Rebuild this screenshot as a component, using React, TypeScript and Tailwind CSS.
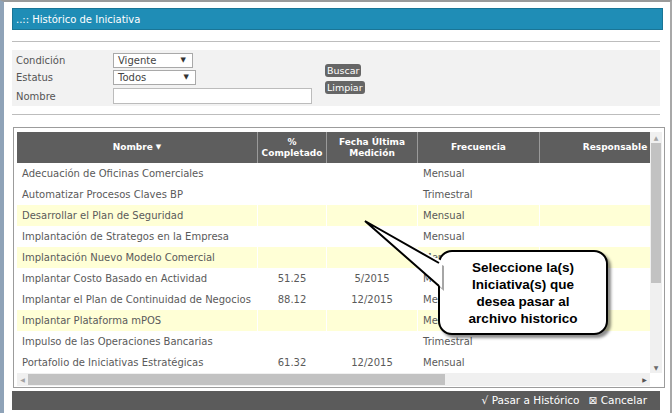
import React from "react";

type Row = {
  nombre: string;
  pct: string;
  fecha: string;
  frec: string;
  marked?: boolean;
};

const rows: Row[] = [
  { nombre: "Adecuación de Oficinas Comerciales", pct: "", fecha: "", frec: "Mensual" },
  { nombre: "Automatizar Procesos Claves BP", pct: "", fecha: "", frec: "Trimestral" },
  { nombre: "Desarrollar el Plan de Seguridad", pct: "", fecha: "", frec: "Mensual", marked: true },
  { nombre: "Implantación de Strategos en la Empresa", pct: "", fecha: "", frec: "Mensual" },
  { nombre: "Implantación Nuevo Modelo Comercial", pct: "", fecha: "", frec: "Mensual", marked: true },
  { nombre: "Implantar Costo Basado en Actividad", pct: "51.25", fecha: "5/2015", frec: "Mensual" },
  { nombre: "Implantar el Plan de Continuidad de Negocios", pct: "88.12", fecha: "12/2015", frec: "Mensual" },
  { nombre: "Implantar Plataforma mPOS", pct: "", fecha: "", frec: "Mensual", marked: true },
  { nombre: "Impulso de las Operaciones Bancarias", pct: "", fecha: "", frec: "Trimestral" },
  { nombre: "Portafolio de Iniciativas Estratégicas", pct: "61.32", fecha: "12/2015", frec: "Mensual" },
];

const FakeSelect = ({ value, width }: { value: string; width: string }) => (
  <div
    className={`${width} h-[15px] bg-white border border-[#a9a9a9] flex items-center justify-between pl-[4px] pr-[6px] text-[10px] text-[#444]`}
  >
    <span>{value}</span>
    <span className="text-[7px] text-[#333]">▼</span>
  </div>
);

const App = () => {
  return (
    <div className="w-[672px] h-[413px] bg-white overflow-hidden font-['DejaVu_Sans',sans-serif]">
      <div className="relative h-[413px] border-t-2 border-r-2 border-l-[4px] border-t-[#9a9a9a] border-r-[#a8a8a8] border-l-[#8fa3b8] pl-[8px] pr-[7px] pt-[6px]">
        {/* title */}
        <div className="h-[22px] bg-[#1f8db6] border border-[#1a7596] flex items-center pl-[3px] text-[10px] text-white">
          ..:: Histórico de Iniciativa
        </div>
        <div className="h-[1px] bg-[#bdbdbd] mt-[11px] mr-[3px]" />

        {/* filters */}
        <div className="h-[56px] bg-[#f2f2f2] mt-[8px] mr-[3px] flex items-center text-[10px] text-[#555]">
          <div className="flex flex-col gap-[2px] pl-[4px] mt-[1px]">
            <div className="flex items-center h-[15px]">
              <span className="w-[97px]">Condición</span>
              <FakeSelect value="Vigente" width="w-[80px]" />
            </div>
            <div className="flex items-center h-[15px]">
              <span className="w-[97px]">Estatus</span>
              <FakeSelect value="Todos" width="w-[83px]" />
            </div>
            <div className="flex items-center h-[16px] mt-[1px]">
              <span className="w-[97px]">Nombre</span>
              <div className="w-[199px] h-[16px] bg-white border border-[#bcbcbc]" />
            </div>
          </div>
          <div className="flex flex-col items-start gap-[4px] ml-[13px] mt-[1px]">
            <div className="h-[13px] px-[2px] rounded-[3px] bg-[#666] text-white text-[9.5px] leading-[13px]">Buscar</div>
            <div className="h-[13px] px-[2px] rounded-[3px] bg-[#666] text-white text-[9.5px] leading-[13px]">Limpiar</div>
          </div>
        </div>
        <div className="h-[1px] bg-[#bdbdbd] mt-[8px] mr-[3px]" />

        {/* grid */}
        <div className="mt-[12px] ml-[1px] w-[652px] h-[261px] border border-[#9c9c9c] pl-[3px] pt-[4px]">
          <div className="flex w-[645px] h-[241px]">
            <div className="w-[633px] overflow-hidden">
              <div className="flex w-[673px] h-[31px] bg-[#5e5e5e] text-white text-[9px] font-bold leading-[11px]">
                <div className="w-[241px] flex items-center justify-center border-r border-[#9a9a9a]">
                  Nombre
                  <span className="ml-[3px] text-[7px]">▼</span>
                </div>
                <div className="w-[69px] flex flex-col items-center justify-center text-center border-r border-[#9a9a9a]">
                  <span>%</span>
                  <span>Completado</span>
                </div>
                <div className="w-[91px] flex flex-col items-center justify-center text-center border-r border-[#9a9a9a]">
                  <span>Fecha Última</span>
                  <span>Medición</span>
                </div>
                <div className="w-[122px] flex items-center justify-center border-r border-[#9a9a9a]">Frecuencia</div>
                <div className="w-[150px] flex items-center justify-center">Responsable</div>
              </div>
              {rows.map((r) => (
                <div
                  key={r.nombre}
                  className={`flex w-[673px] h-[21px] items-center text-[10px] text-[#5a5a5a] ${r.marked ? "bg-[#ffffd6]" : "bg-white"}`}
                >
                  <div className="w-[241px] h-full flex items-center pl-[5px] border-r border-white">{r.nombre}</div>
                  <div className="w-[69px] h-full flex items-center justify-center border-r border-white">{r.pct}</div>
                  <div className="w-[91px] h-full flex items-center justify-center border-r border-white">{r.fecha}</div>
                  <div className="w-[122px] h-full flex items-center pl-[5px] border-r border-white">{r.frec}</div>
                  <div className="w-[150px] h-full" />
                </div>
              ))}
            </div>
            {/* vertical scrollbar */}
            <div className="w-[12px] h-full bg-[#f0f0f0] flex flex-col items-center">
              <div className="h-[11px] flex items-center text-[6px] text-[#a3a3a3]">▲</div>
              <div className="w-[10px] h-[140px] bg-[#c2c2c2]" />
              <div className="flex-1" />
              <div className="h-[11px] flex items-center text-[6px] text-[#6a6a6a]">▼</div>
            </div>
          </div>
          {/* horizontal scrollbar */}
          <div className="flex w-[645px] h-[13px]">
            <div className="w-[633px] h-full bg-[#f0f0f0] flex items-center">
              <div className="w-[11px] flex justify-center text-[6px] text-[#a3a3a3]">◀</div>
              <div className="w-[417px] h-[11px] bg-[#c2c2c2]" />
              <div className="flex-1" />
              <div className="w-[11px] flex justify-center text-[6px] text-[#555]">▶</div>
            </div>
            <div className="w-[12px] h-full bg-white" />
          </div>
        </div>

        {/* footer */}
        <div className="mt-[3px] mr-[3px] h-[19px] bg-[#5b5b5b] flex items-center justify-end pr-[13px] gap-[9px] text-[10.5px] text-white">
          <span>√ Pasar a Histórico</span>
          <span>⊠ Cancelar</span>
        </div>

        {/* callout */}
        <div className="absolute left-[434px] top-[248px] w-[170px] h-[85px] rounded-[14px] border-2 border-black bg-white shadow-[3px_3px_3px_rgba(0,0,0,0.45)] flex items-center justify-center text-center font-['Liberation_Sans',sans-serif] font-bold text-[13.5px] leading-[17px] text-black">
          <div>
            Seleccione la(s)
            <br />
            Iniciativa(s) que
            <br />
            desea pasar al
            <br />
            archivo historico
          </div>
        </div>
        <svg className="absolute left-[352px] top-[209px]" width="95" height="85" viewBox="0 0 95 85">
          <polygon points="12,13 88,55 88,80" fill="rgba(0,0,0,0.35)" />
          <polygon points="9,10 86,50 86,77" fill="white" />
          <path d="M83,52 L9,10 L83,75" fill="none" stroke="black" strokeWidth="2" strokeLinejoin="miter" />
        </svg>
      </div>
    </div>
  );
};

export default App;
